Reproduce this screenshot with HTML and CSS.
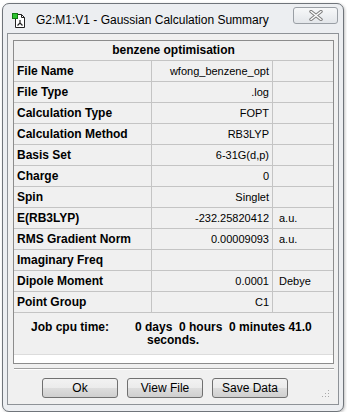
FILE: index.html
```html
<!DOCTYPE html>
<html lang="en">
<head>
    <meta charset="UTF-8">
    <meta name="viewport" content="width=device-width, initial-scale=1.0">
    <title>Gaussian Calculation Summary</title>
    <link rel="stylesheet" href="styles.css">
</head>
<body>
    <div class="window">
        <div class="titlebar">
            <svg class="app-icon" width="14" height="16" viewBox="0 0 14 16">
                <path d="M3.5 1.5h6l3 3v10h-9z" fill="#fff" stroke="#222"/>
                <path d="M9.5 1.5v3h3" fill="none" stroke="#222"/>
                <path d="M8 7v3M8 10l-2.5 2.5M8 10l2.5 2.5" stroke="#222" stroke-width="1.2" fill="none"/>
                <rect x="0.5" y="0.5" width="5" height="5" fill="#2fc42f" stroke="#137a13"/>
            </svg>
            <span class="title">G2:M1:V1 - Gaussian Calculation Summary</span>
            <div class="close">
                <svg width="14" height="11" viewBox="0 0 14 11">
                    <path d="M2 1.5l10 8M12 1.5l-10 8" stroke="#7d7d7d" stroke-width="3.4" stroke-linecap="round"/>
                    <path d="M2 1.5l10 8M12 1.5l-10 8" stroke="#fff" stroke-width="1.4" stroke-linecap="round"/>
                </svg>
            </div>
        </div>
        <div class="client">
            <div class="panel">
                <div class="row head">benzene optimisation</div>
                <div class="row"><span class="lbl">File Name</span><span class="val">wfong_benzene_opt</span><span class="unit"></span></div>
                <div class="row"><span class="lbl">File Type</span><span class="val">.log</span><span class="unit"></span></div>
                <div class="row"><span class="lbl">Calculation Type</span><span class="val">FOPT</span><span class="unit"></span></div>
                <div class="row"><span class="lbl">Calculation Method</span><span class="val">RB3LYP</span><span class="unit"></span></div>
                <div class="row"><span class="lbl">Basis Set</span><span class="val">6-31G(d,p)</span><span class="unit"></span></div>
                <div class="row"><span class="lbl">Charge</span><span class="val">0</span><span class="unit"></span></div>
                <div class="row"><span class="lbl">Spin</span><span class="val">Singlet</span><span class="unit"></span></div>
                <div class="row"><span class="lbl">E(RB3LYP)</span><span class="val">-232.25820412</span><span class="unit">a.u.</span></div>
                <div class="row"><span class="lbl">RMS Gradient Norm</span><span class="val">0.00009093</span><span class="unit">a.u.</span></div>
                <div class="row"><span class="lbl">Imaginary Freq</span><span class="val"></span><span class="unit"></span></div>
                <div class="row"><span class="lbl">Dipole Moment</span><span class="val">0.0001</span><span class="unit">Debye</span></div>
                <div class="row"><span class="lbl">Point Group</span><span class="val">C1</span><span class="unit"></span></div>
                <div class="cpu">
                    <span class="cpu-label">Job cpu time:</span>
                    <span class="cpu-value">0 days  0 hours  0 minutes 41.0<br><span class="cpu-more">seconds.</span></span>
                </div>
                <div class="blank"></div>
            </div>
            <div class="separator"></div>
            <div class="buttons">
                <button class="btn">Ok</button>
                <button class="btn">View File</button>
                <button class="btn">Save Data</button>
                <svg class="grip" width="8" height="8" viewBox="0 0 8 8">
                    <rect x="6" y="0" width="1" height="1" fill="#a8a8a8"/>
                    <rect x="3" y="3" width="1" height="1" fill="#a8a8a8"/>
                    <rect x="6" y="3" width="1" height="1" fill="#a8a8a8"/>
                    <rect x="0" y="6" width="1" height="1" fill="#a8a8a8"/>
                    <rect x="3" y="6" width="1" height="1" fill="#a8a8a8"/>
                    <rect x="6" y="6" width="1" height="1" fill="#a8a8a8"/>
                </svg>
            </div>
        </div>
    </div>
</body>
</html>
```

FILE: styles.css
```css
body{
    margin: 0;
    background: #fff;
    font-family: "Liberation Sans", Arial, sans-serif;
    color: #000;
}
.window{
    box-sizing: border-box;
    width: 342px;
    height: 409px;
    margin: 3px 0 0 2px;
    padding: 0 4px 6px 4px;
    border: 1px solid #6f747a;
    border-radius: 7px;
    background: #eceef1;
    box-shadow: 1px 1px 3px rgba(0,0,0,0.25);
    display: flex;
    flex-direction: column;
}
.titlebar{
    height: 29px;
    display: flex;
    align-items: flex-start;
    flex-shrink: 0;
}
.app-icon{
    margin: 9px 0 0 5px;
}
.title{
    margin: 9px 0 0 10px;
    font-size: 12px;
    line-height: 14px;
}
.close{
    margin: 3px 1px 0 auto;
    width: 45px;
    height: 17px;
    box-sizing: border-box;
    border: 1px solid #9a9fa5;
    border-radius: 3px;
    background: linear-gradient(#f7f8f9, #e3e6ea);
    display: flex;
    align-items: center;
    justify-content: center;
}
.client{
    flex: 1;
    border: 1px solid #8e9297;
    background: #f0f0f0;
    padding: 6px 4px 0 5px;
    display: flex;
    flex-direction: column;
}
.panel{
    border: 1px solid #8c8c8c;
    background: #f0f0f0;
}
.row{
    display: grid;
    grid-template-columns: 138px 121px 1fr;
    height: 21px;
    box-sizing: border-box;
    border-bottom: 1px solid #c4c4c4;
    font-size: 11px;
}
.row.head{
    display: block;
    height: 20px;
    text-align: center;
    font-weight: bold;
    font-size: 12px;
    line-height: 19px;
}
.lbl{
    border-right: 1px solid #c4c4c4;
    font-weight: bold;
    font-size: 12px;
    line-height: 20px;
    padding-left: 3px;
}
.val{
    border-right: 1px solid #c4c4c4;
    text-align: right;
    line-height: 20px;
    padding-right: 3px;
}
.unit{
    line-height: 20px;
    padding-left: 6px;
}
.cpu{
    height: 41px;
    box-sizing: border-box;
    padding: 8px 0 0 17px;
    display: flex;
    font-weight: bold;
    font-size: 12px;
    line-height: 13px;
}
.cpu-label{
    width: 104px;
}
.cpu-value{
    white-space: pre;
}
.cpu-more{
    padding-left: 12px;
}
.blank{
    height: 8px;
    background: #fff;
    border-top: 1px solid #dcdcdc;
}
.separator{
    margin: 4px 0 0 1px;
    border-top: 1px solid #a0a0a0;
    border-bottom: 1px solid #fff;
}
.buttons{
    display: flex;
    align-items: flex-start;
    gap: 9px;
    padding: 8px 0 0 29px;
}
.btn{
    width: 76px;
    height: 20px;
    box-sizing: border-box;
    border: 1px solid #707070;
    border-radius: 3px;
    background: linear-gradient(#f2f2f2 0%, #ebebeb 50%, #dddddd 51%, #cfcfcf 100%);
    font-family: "Liberation Sans", Arial, sans-serif;
    font-size: 12px;
    color: #000;
    padding: 0;
}
.grip{
    margin: 12px 0 0 auto;
    margin-right: 4px;
}
```
